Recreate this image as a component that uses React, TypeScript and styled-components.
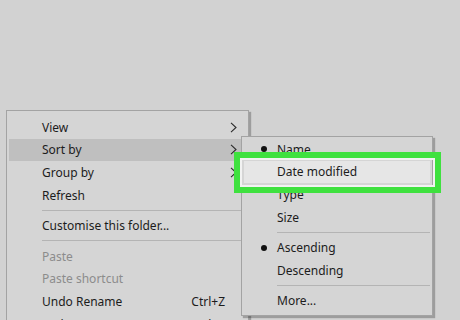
import React from "react";
import styled, { createGlobalStyle } from "styled-components";

const GlobalStyle = createGlobalStyle`
  html, body {
    margin: 0;
    padding: 0;
    background: #d2d2d2;
    overflow: hidden;
  }
`;

type Item =
  | { kind: "sep" }
  | {
      kind?: "item";
      label: string;
      submenu?: boolean;
      shortcut?: string;
      disabled?: boolean;
      hovered?: boolean;
      checked?: boolean;
    };

const mainItems: Item[] = [
  { label: "View", submenu: true },
  { label: "Sort by", submenu: true, hovered: true },
  { label: "Group by", submenu: true },
  { label: "Refresh" },
  { kind: "sep" },
  { label: "Customise this folder..." },
  { kind: "sep" },
  { label: "Paste", disabled: true },
  { label: "Paste shortcut", disabled: true },
  { label: "Undo Rename", shortcut: "Ctrl+Z" },
  { label: "Redo Rename", shortcut: "Ctrl+Y" },
];

const sortItems: Item[] = [
  { label: "Name", checked: true },
  { label: "Date modified", hovered: true },
  { label: "Type" },
  { label: "Size" },
  { kind: "sep" },
  { label: "Ascending", checked: true },
  { label: "Descending" },
  { kind: "sep" },
  { label: "More..." },
];

const Chevron = () => (
  <svg width="7" height="11" viewBox="0 0 7 11">
    <path d="M1 0.8 L6 5.5 L1 10.2" fill="none" stroke="#2b2b2b" strokeWidth="1.1" />
  </svg>
);

const App: React.FC = () => (
  <>
    <GlobalStyle />
    <Desktop>
      <MainMenu>
        {mainItems.map((item, i) =>
          item.kind === "sep" ? (
            <Separator key={i} />
          ) : (
            <Row key={i} $hovered={item.hovered} $disabled={item.disabled}>
              <Label>{item.label}</Label>
              {item.shortcut && <Shortcut>{item.shortcut}</Shortcut>}
              {item.submenu && (
                <Arrow>
                  <Chevron />
                </Arrow>
              )}
            </Row>
          )
        )}
      </MainMenu>
      <SubMenu>
        {sortItems.map((item, i) =>
          item.kind === "sep" ? (
            <SubSeparator key={i} />
          ) : (
            <SubRow key={i} $hovered={item.hovered}>
              <Check>{item.checked && <Bullet />}</Check>
              <Label>{item.label}</Label>
            </SubRow>
          )
        )}
      </SubMenu>
      <Highlight />
    </Desktop>
  </>
);

export default App;

const Desktop = styled.div`
  position: relative;
  width: 460px;
  height: 320px;
  overflow: hidden;
  font-family: "Noto Sans", "Open Sans", sans-serif;
  font-size: 12px;
  color: #1c1c1c;
`;

const MainMenu = styled.div`
  position: absolute;
  left: 6px;
  top: 110px;
  width: 237px;
  padding: 5px 2px;
  background: #d5d5d5;
  border: 1px solid #a3a3a3;
  box-shadow: 2px 2px 1px rgba(0, 0, 0, 0.25);
  display: flex;
  flex-direction: column;
`;

const Row = styled.div<{ $hovered?: boolean; $disabled?: boolean }>`
  display: flex;
  align-items: center;
  height: 22.6px;
  padding-left: 33px;
  padding-right: 8px;
  background: ${(p) => (p.$hovered ? "#bfbfbf" : "transparent")};
  color: ${(p) => (p.$disabled ? "#8c8c8c" : "#1c1c1c")};
`;

const Label = styled.span`
  flex: 1;
  white-space: nowrap;
`;

const Shortcut = styled.span`
  margin-right: 13px;
`;

const Arrow = styled.span`
  display: flex;
  align-items: center;
  margin-right: 1px;
`;

const Separator = styled.div`
  height: 1px;
  margin: 3.5px 3px 3.5px 33px;
  background: #b4b4b4;
`;

const SubMenu = styled.div`
  position: absolute;
  left: 241px;
  top: 136px;
  width: 190px;
  padding: 1px 0 3px;
  background: #d5d5d5;
  border: 1px solid #a3a3a3;
  box-shadow: 2px 2px 1px rgba(0, 0, 0, 0.25);
  display: flex;
  flex-direction: column;
`;

const SubRow = styled.div<{ $hovered?: boolean }>`
  display: flex;
  align-items: center;
  height: 22.6px;
  margin: 0 2px;
  background: ${(p) => (p.$hovered ? "#e6e6e6" : "transparent")};
`;

const Check = styled.span`
  width: 33px;
  display: flex;
  justify-content: center;
  padding-left: 6px;
  box-sizing: border-box;
`;

const Bullet = styled.span`
  width: 6px;
  height: 6px;
  border-radius: 50%;
  background: #111;
`;

const SubSeparator = styled.div`
  height: 1px;
  margin: 3.5px 2px 3.5px 35px;
  background: #b4b4b4;
`;

const Highlight = styled.div`
  position: absolute;
  left: 234px;
  top: 152px;
  width: 195px;
  height: 29px;
  border: 6px solid #3fe13f;
  box-shadow: inset 0 0 0 2px #f2f2f2;
  pointer-events: none;
`;
